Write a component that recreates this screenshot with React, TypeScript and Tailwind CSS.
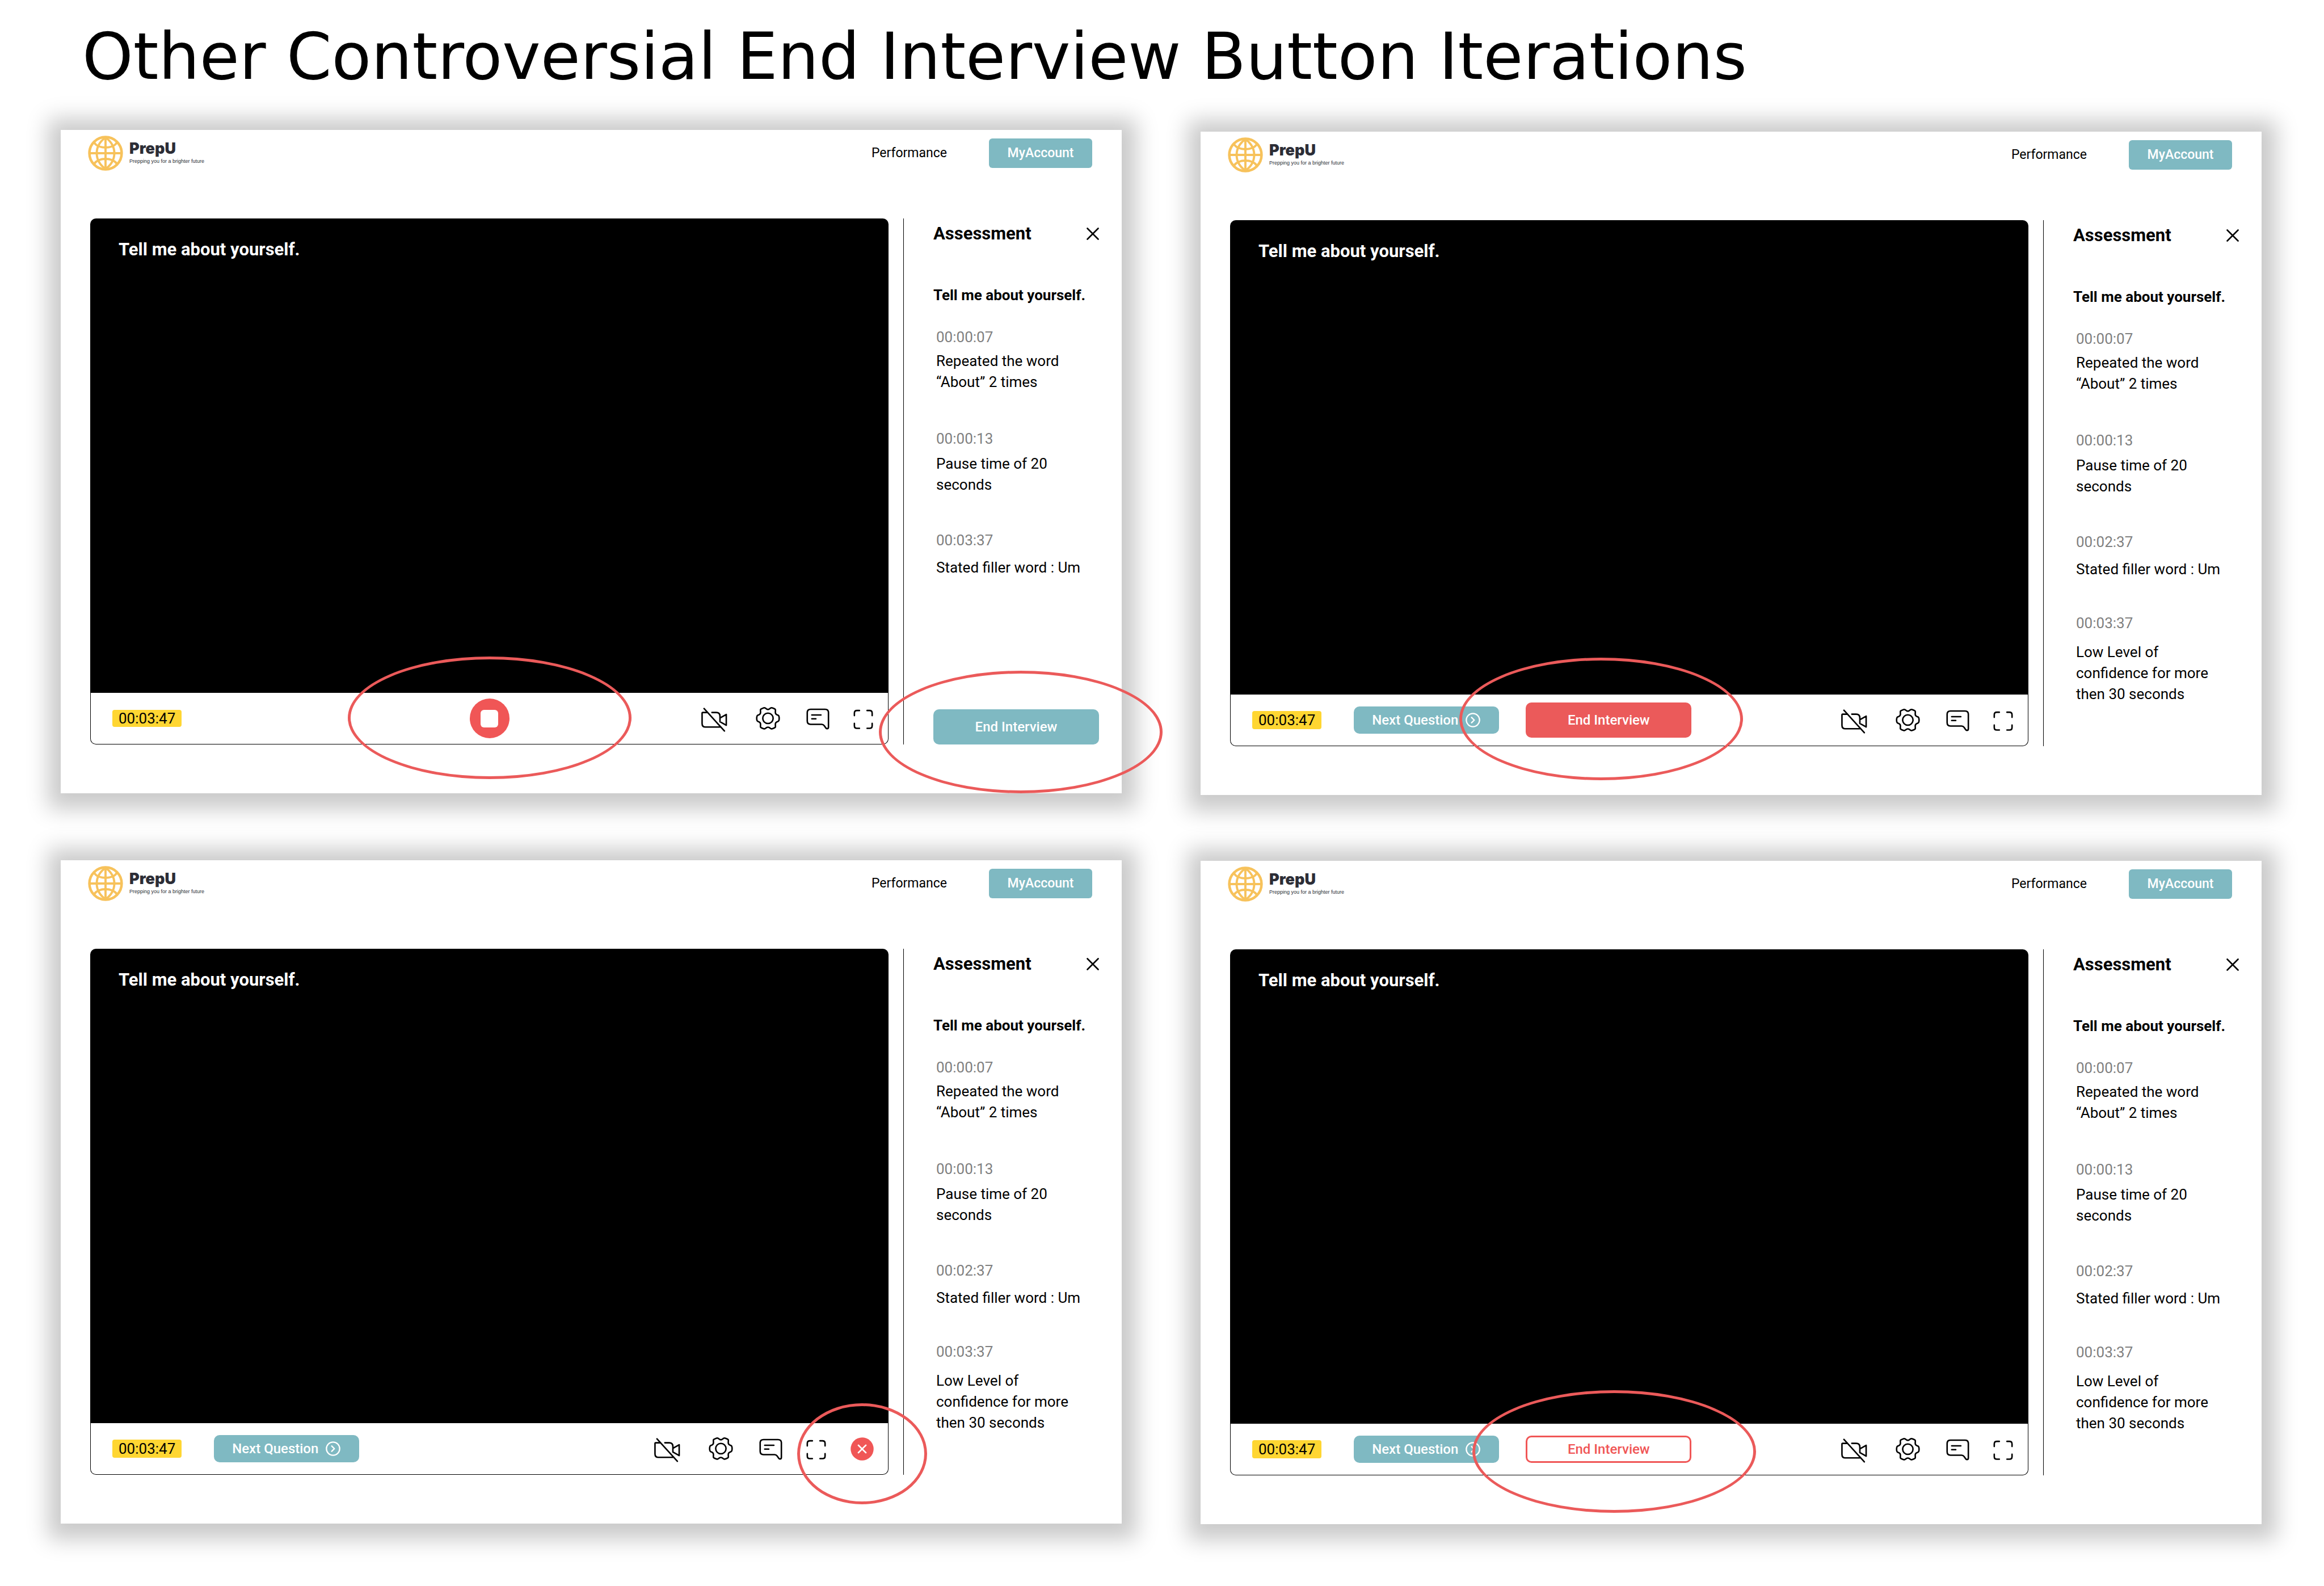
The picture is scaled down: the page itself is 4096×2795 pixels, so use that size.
import type { ReactNode } from "react";
import { CircleChevronRight } from "lucide-react";

type Variant = "stop" | "solid" | "circle" | "outline";

type Note = { time: string; text: string; textGap: string; height: string };

const shortNotes: Note[] = [
  { time: "00:00:07", text: "Repeated the word “About” 2 times", textGap: "mt-[5px]", height: "min-h-[179px]" },
  { time: "00:00:13", text: "Pause time of 20 seconds", textGap: "mt-[7px]", height: "min-h-[179px]" },
  { time: "00:03:37", text: "Stated filler word : Um", textGap: "mt-[11px]", height: "min-h-[143px]" },
];

const fullNotes: Note[] = [
  shortNotes[0],
  shortNotes[1],
  { ...shortNotes[2], time: "00:02:37" },
  { time: "00:03:37", text: "Low Level of confidence for more then 30 seconds", textGap: "mt-[14px]", height: "" },
];

function Globe() {
  return (
    <svg viewBox="0 0 96 96" className="size-[62px]" fill="none" stroke="#F7C25B" strokeWidth="6" aria-hidden="true">
      <circle cx="48" cy="48" r="44" strokeWidth="7" />
      <path d="M48 4v88M4 48h88" />
      <path d="M48 5C16 28 16 68 48 91M48 5C80 28 80 68 48 91" />
      <path d="M17 19C28 37 68 37 79 19M17 77C28 59 68 59 79 77" />
    </svg>
  );
}

function Glyph({ children }: { children: ReactNode }) {
  return (
    <svg
      viewBox="0 0 72 72"
      className="size-[47px]"
      fill="none"
      stroke="currentColor"
      strokeWidth="4"
      strokeLinecap="round"
      strokeLinejoin="round"
      aria-hidden="true"
    >
      {children}
    </svg>
  );
}

function CameraOffIcon() {
  return (
    <Glyph>
      <path d="M18.3 19.3H5.6Q3.7 19.3 3.7 21.3V49.3Q3.7 58.7 13 58.7H52" />
      <path d="M30.3 19.3H42Q52 19.3 52 29.3V44.3L69 53.7V24.7L52 34.3" />
      <path d="M9 8.7L64 69.3" />
    </Glyph>
  );
}

function GearIcon() {
  return (
    <Glyph>
      <circle cx="36" cy="35" r="14" />
      <path d="M32.5 10Q36 12 39.5 10L43 7.5Q45 6 47.5 6.8Q52 8.2 55.5 10.5Q56.5 11.5 56.2 14L56 19Q56 23 59.5 25L63.5 26.8Q65.5 28 66 31Q66.6 35 66 39Q65.5 42 63.5 43.2L59.5 45Q56 47 56 51L56.2 56Q56.5 58.5 55.5 59.5Q52 61.8 47.5 63.2Q45 64 43 62.5L39.5 60Q36 58 32.5 60L29 62.5Q27 64 24.5 63.2Q20 61.8 16.5 59.5Q15.5 58.5 15.8 56L16 51Q16 47 12.5 45L8.5 43.2Q6.5 42 6 39Q5.4 35 6 31Q6.5 28 8.5 26.8L12.5 25Q16 23 16 19L15.8 14Q15.5 11.5 16.5 10.5Q20 8.2 24.5 6.8Q27 6 29 7.5Z" />
    </Glyph>
  );
}

function CommentIcon() {
  return (
    <Glyph>
      <path d="M16.3 10.7H55.6Q64.6 10.7 64.6 19.7V59Q64.6 63 60.6 63Q58.6 63 57.3 61L53 54.7Q50.5 51.3 46.3 51.3H16.3Q7.3 51.3 7.3 42.3V19.7Q7.3 10.7 16.3 10.7Z" />
      <path d="M19.6 26H44.3M19.6 36.3H30.6" />
    </Glyph>
  );
}

function FullscreenIcon() {
  return (
    <Glyph>
      <path d="M25.7 14H19Q12 14 12 21V27.7M46.3 14H53Q60 14 60 21V27.7M25.7 62H19Q12 62 12 55V48.7M46.3 62H53Q60 62 60 55V48.7" />
    </Glyph>
  );
}

function Highlight({ className }: { className: string }) {
  return (
    <span
      aria-hidden="true"
      className={`pointer-events-none absolute z-10 rounded-[50%] border-[5px] border-[#EB5A5A] ${className}`}
    />
  );
}

function Timer() {
  return (
    <span className="rounded-[4px] bg-[#FFD632] px-[11px] text-[26px] leading-8 whitespace-nowrap">00:03:47</span>
  );
}

function NextButton() {
  return (
    <button
      type="button"
      className="flex h-12 w-64 items-center justify-center gap-3 rounded-[10px] bg-[#7FB9C2] text-[24px] font-medium whitespace-nowrap text-white"
    >
      Next Question
      <CircleChevronRight className="size-7" strokeWidth={2} aria-hidden="true" />
    </button>
  );
}

function Tools({ children }: { children?: ReactNode }) {
  return (
    <div className="ml-auto flex items-center">
      <button type="button" aria-label="Turn camera off" className="mr-12">
        <CameraOffIcon />
      </button>
      <button type="button" aria-label="Settings" className="mr-[41px]">
        <GearIcon />
      </button>
      <button type="button" aria-label="Comments" className="mr-[33px]">
        <CommentIcon />
      </button>
      <button type="button" aria-label="Full screen">
        <FullscreenIcon />
      </button>
      {children}
    </div>
  );
}

function ControlBar({ variant }: { variant: Variant }) {
  const frame = "h-[91px] items-center rounded-b-[10px] border border-t-0 border-black pl-[38px]";

  if (variant === "stop") {
    return (
      <div className={`grid grid-cols-[1fr_auto_1fr] pr-5 ${frame}`}>
        <div>
          <Timer />
        </div>
        <div className="relative mr-[18px]">
          <button
            type="button"
            aria-label="Stop recording"
            className="flex size-[70px] items-center justify-center rounded-full bg-[#F05656]"
          >
            <span className="size-[31px] rounded-[6px] bg-white" />
          </button>
          <Highlight className="-top-[74px] -left-[215px] h-[216px] w-[500px]" />
        </div>
        <Tools />
      </div>
    );
  }

  return (
    <div className={`flex ${variant === "circle" ? "pr-[22px]" : "pr-5"} ${frame}`}>
      <Timer />
      <div className="ml-[57px]">
        <NextButton />
      </div>
      {variant === "solid" && (
        <div className="relative ml-[47px]">
          <button
            type="button"
            className="h-[62px] w-[292px] rounded-[10px] bg-[#EB5A5A] text-[24px] font-medium text-white"
          >
            End Interview
          </button>
          <Highlight className="-top-[79px] -left-[117px] h-[216px] w-[500px]" />
        </div>
      )}
      {variant === "outline" && (
        <div className="relative ml-[47px]">
          <button
            type="button"
            className="h-12 w-[292px] rounded-[10px] border-[3px] border-[#F05656] text-[24px] font-medium text-[#F05656]"
          >
            End Interview
          </button>
          <Highlight className="-top-[80px] -left-[94px] h-[216px] w-[500px]" />
        </div>
      )}
      <Tools>
        {variant === "circle" && (
          <div className="relative ml-[34px]">
            <button type="button" aria-label="End interview" className="block">
              <svg viewBox="0 0 72 72" className="size-[47px]" aria-hidden="true">
                <circle cx="36" cy="36" r="31" fill="#F05656" />
                <path d="M26 26L46 46M46 26L26 46" stroke="white" strokeWidth="4" strokeLinecap="round" />
              </svg>
            </button>
            <Highlight className="-top-[57px] -left-[91px] h-[178px] w-[229px]" />
          </div>
        )}
      </Tools>
    </div>
  );
}

function Assessment({ variant }: { variant: Variant }) {
  const notes = variant === "stop" ? shortNotes : fullNotes;
  return (
    <aside className="flex w-[385px] shrink-0 flex-col border-l border-black pt-[9px] pr-10 pl-[52px]">
      <div className="flex items-center justify-between">
        <h2 className="text-[31px] leading-9 font-bold">Assessment</h2>
        <button type="button" aria-label="Close assessment">
          <svg viewBox="0 0 22 22" className="size-[22px]" aria-hidden="true">
            <path d="M1.5 1.5L20.5 20.5M20.5 1.5L1.5 20.5" stroke="black" strokeWidth="2.6" strokeLinecap="round" />
          </svg>
        </button>
      </div>
      <h3 className="mt-[72px] text-[26px] leading-[37px] font-bold whitespace-nowrap">Tell me about yourself.</h3>
      <ul className="mt-[37px] pr-5 pl-[5px] text-[26px] leading-[37px]">
        {notes.map((note) => (
          <li key={note.time} className={note.height}>
            <time className="block text-[#808080]">{note.time}</time>
            <p className={note.textGap}>{note.text}</p>
          </li>
        ))}
      </ul>
      {variant === "stop" && (
        <div className="relative mt-auto">
          <button
            type="button"
            className="h-[62px] w-full rounded-[10px] bg-[#7FB9C2] text-[24px] font-medium text-white"
          >
            End Interview
          </button>
          <Highlight className="-top-[68px] -left-[96px] h-[216px] w-[500px]" />
        </div>
      )}
    </aside>
  );
}

function Screen({ variant }: { variant: Variant }) {
  return (
    <article className="bg-white pb-[86px] shadow-[2px_4px_36px_24px_rgba(0,0,0,0.21)]">
      <header className="flex items-center pt-[10px] pr-[52px] pb-[84px] pl-12">
        <Globe />
        <div className="ml-[11px] flex flex-col gap-1 text-[#2C2D36]">
          <p className="font-['Inter',sans-serif] text-[27px] leading-6 font-black">PrepU</p>
          <p className="font-['Liberation_Sans',sans-serif] text-[9px] leading-3">Prepping you for a brighter future</p>
        </div>
        <nav className="ml-auto flex items-center gap-[74px] text-[23px]">
          <a href="#performance">Performance</a>
          <button type="button" className="h-[52px] w-[182px] rounded-[6px] bg-[#7FB9C2] font-medium text-white">
            MyAccount
          </button>
        </nav>
      </header>
      <div className="flex gap-[26px] pl-[52px]">
        <section className="min-w-0 flex-1">
          <div className="aspect-[1407/836] rounded-t-[10px] bg-black px-[50px] pt-[37px]">
            <p className="text-[31px] leading-9 font-bold text-white">Tell me about yourself.</p>
          </div>
          <ControlBar variant={variant} />
        </section>
        <Assessment variant={variant} />
      </div>
    </article>
  );
}

export default function App() {
  return (
    <main className="min-h-screen bg-white pt-9 pr-[110px] pb-[110px] pl-[107px] font-['Roboto',sans-serif] text-black">
      <h1 className="pl-[38px] font-['DejaVu_Sans',sans-serif] text-[114px] leading-[128px]">
        Other Controversial End Interview Button Iterations
      </h1>
      <div className="mt-[65px] grid grid-cols-2 items-start gap-[139px]">
        <div className="flex flex-col gap-[118px]">
          <Screen variant="stop" />
          <Screen variant="circle" />
        </div>
        <div className="flex flex-col gap-[116px] pt-[3px]">
          <Screen variant="solid" />
          <Screen variant="outline" />
        </div>
      </div>
    </main>
  );
}
